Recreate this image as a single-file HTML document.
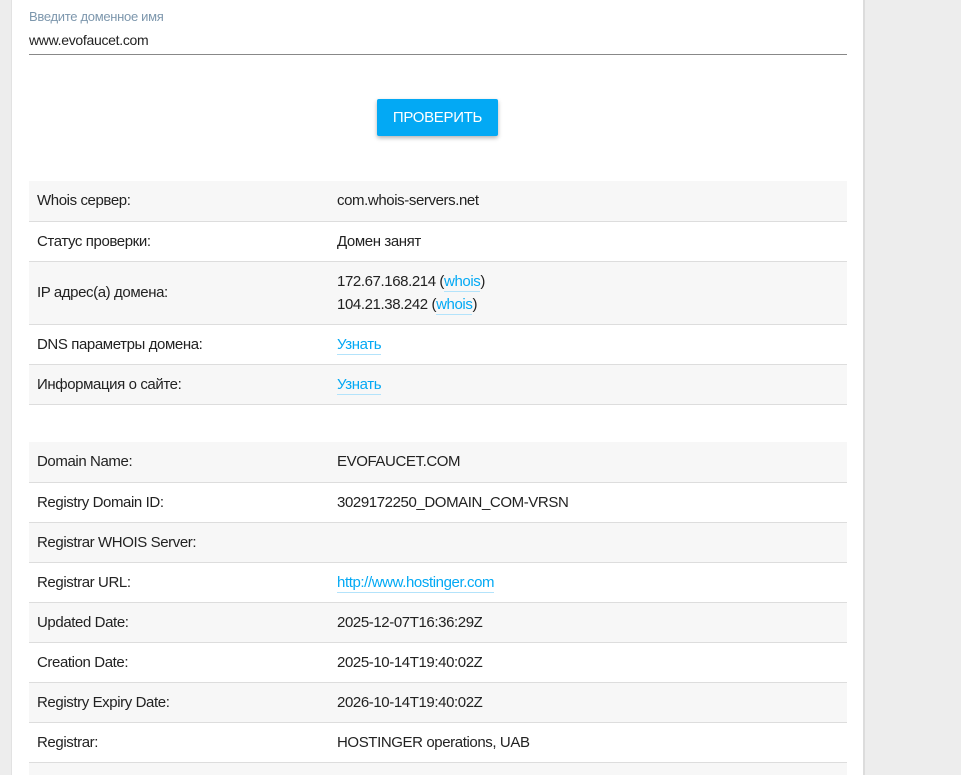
<!DOCTYPE html>
<html><head><meta charset="utf-8"><style>
*{margin:0;padding:0;box-sizing:border-box}
html{width:961px;height:775px;overflow:hidden}
body{width:961px;height:775px;overflow:hidden;background:#ededed;font-family:"Liberation Sans Narrow","Liberation Sans",sans-serif;color:#222;position:relative}
.panel{position:absolute;left:11px;top:0;width:854px;height:775px;background:#fff;border-left:1px solid #e2e2e2;border-right:2px solid #dcdcdc}
.lbl{position:absolute;left:29px;top:9px;font-size:13px;color:#7d97ad;letter-spacing:-0.3px}
.inp{position:absolute;left:29px;top:32px;font-size:14px;letter-spacing:-0.3px}
.line{position:absolute;left:29px;top:54px;width:818px;height:1px;background:#888}
.btn{position:absolute;left:377px;top:99px;width:121px;height:37px;background:#03a9f4;color:#fff;font-size:15px;text-align:center;line-height:37px;border-radius:2px;box-shadow:0 2px 4px rgba(0,0,0,.3);letter-spacing:-0.3px}
table{position:absolute;left:29px;width:818px;border-collapse:collapse;font-size:15px;letter-spacing:-0.4px}
td{height:40px;border-bottom:1px solid #ddd;padding:0 8px;vertical-align:middle}
td+td{padding-left:0}
td:first-child{width:308px}
tr:nth-child(odd){background:#f7f7f7}
a{color:#03a9f4;text-decoration:none;border-bottom:1px solid #b3e3fb;padding-bottom:1px}
</style></head><body>
<div class="panel"></div>
<div class="lbl">Введите доменное имя</div>
<div class="inp">www.evofaucet.com</div>
<div class="line"></div>
<div class="btn">ПРОВЕРИТЬ</div>
<table style="top:181px">
<tr><td style="height:39px">Whois сервер:</td><td>com.whois-servers.net</td></tr>
<tr><td>Статус проверки:</td><td>Домен занят</td></tr>
<tr><td style="height:63px">IP адрес(а) домена:</td><td style="line-height:23px">172.67.168.214 (<a>whois</a>)<br>104.21.38.242 (<a>whois</a>)</td></tr>
<tr><td style="height:39px">DNS параметры домена:</td><td><a>Узнать</a></td></tr>
<tr><td>Информация о сайте:</td><td><a>Узнать</a></td></tr>
</table>
<table style="top:442px">
<tr><td style="height:39px">Domain Name:</td><td>EVOFAUCET.COM</td></tr>
<tr><td>Registry Domain ID:</td><td>3029172250_DOMAIN_COM-VRSN</td></tr>
<tr><td>Registrar WHOIS Server:</td><td></td></tr>
<tr><td>Registrar URL:</td><td><a>http://www.hostinger.com</a></td></tr>
<tr><td>Updated Date:</td><td>2025-12-07T16:36:29Z</td></tr>
<tr><td style="height:39px">Creation Date:</td><td>2025-10-14T19:40:02Z</td></tr>
<tr><td>Registry Expiry Date:</td><td>2026-10-14T19:40:02Z</td></tr>
<tr><td>Registrar:</td><td>HOSTINGER operations, UAB</td></tr>
<tr><td>Registrar IANA ID:</td><td>1636</td></tr>
</table>
</body></html>
